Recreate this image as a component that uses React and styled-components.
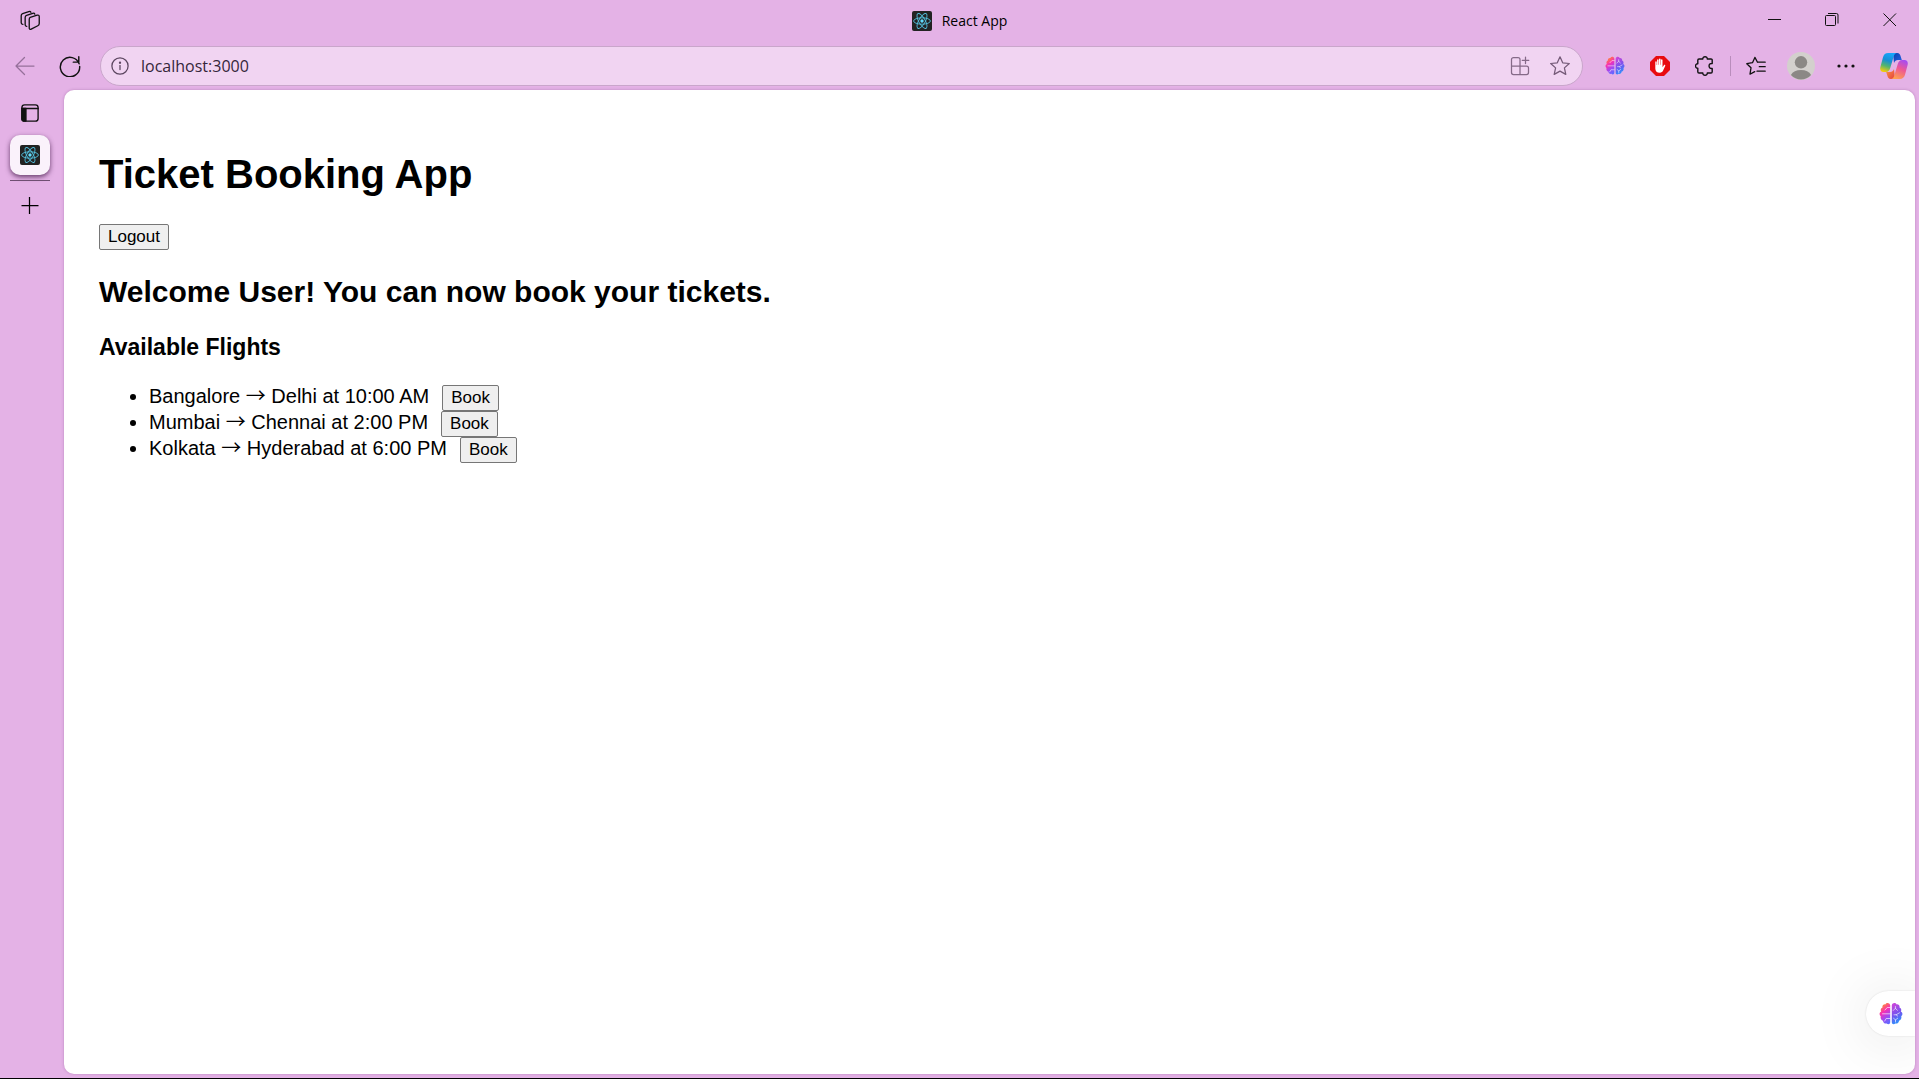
import React, { useId } from "react";
import styled, { createGlobalStyle } from "styled-components";

const color = {
  chrome: "#e4b2e6",
  field: "#f1d4f2",
  fieldBorder: "#c9a6cb",
  ink: "#111111",
};
const uiFont = `"Segoe UI", "Open Sans", "Noto Sans", sans-serif`;

const GlobalStyle = createGlobalStyle`
  * { box-sizing: border-box; }
  body { margin: 0; background: ${color.chrome}; }
`;

const Window = styled.div`
  display: flex;
  flex-direction: column;
  height: 100vh;
  background: ${color.chrome};
  border-bottom: 1px solid #000;
  font-family: ${uiFont};
  color: ${color.ink};
`;

const TitleBar = styled.header`
  display: grid;
  grid-template-columns: 1fr auto 1fr;
  height: 41px;
  flex: none;
`;

const TitleStart = styled.div`
  display: flex;
  align-items: center;
  padding-left: 10px;
`;

const TabTitle = styled.div`
  display: flex;
  align-items: center;
  gap: 10px;
  color: #000;
  font-size: 14px;
  line-height: 20px;
`;

const WindowControls = styled.div`
  display: flex;
  justify-content: flex-end;
`;

const IconButton = styled.button`
  display: flex;
  align-items: center;
  justify-content: center;
  flex: none;
  width: ${(p) => p.$width || 40}px;
  height: 40px;
  padding: 0;
  border: 0;
  background: none;
  color: ${(p) => p.$color || color.ink};
`;

const Toolbar = styled.nav`
  display: flex;
  align-items: center;
  gap: 5px;
  height: 49px;
  flex: none;
  padding: 0 2px 0 5px;
`;

const AddressBar = styled.div`
  display: flex;
  align-items: center;
  flex: 1;
  min-width: 0;
  height: 40px;
  margin: 0 7px 0 5px;
  padding-right: 2px;
  border: 1px solid ${color.fieldBorder};
  border-radius: 20px;
  background: ${color.field};
`;

const AddressInput = styled.input`
  flex: 1;
  min-width: 0;
  height: 30px;
  padding: 0 2px;
  border: 0;
  outline: 0;
  background: transparent;
  color: #35263a;
  font-family: ${uiFont};
  font-size: 16px;
`;

const ToolbarDivider = styled.span`
  width: 1px;
  height: 20px;
  background: #b98dbc;
`;

const Workspace = styled.div`
  display: flex;
  flex: 1;
  min-height: 0;
  padding: 0 4px 4px 0;
`;

const TabRail = styled.aside`
  display: flex;
  flex-direction: column;
  align-items: center;
  flex: none;
  width: 64px;
  padding: 3px 5px 0 0;
`;

const ActiveTab = styled.button`
  display: flex;
  align-items: center;
  justify-content: center;
  width: 40px;
  height: 40px;
  margin-top: 2px;
  padding: 0;
  border: 0;
  border-radius: 10px;
  background: #faf2fb;
  box-shadow: 0 2px 5px rgba(50, 10, 55, 0.7);
`;

const RailDivider = styled.hr`
  width: 40px;
  height: 1px;
  margin: 5px 0;
  border: 0;
  background: #6f4f72;
`;

const Viewport = styled.main`
  position: relative;
  flex: 1;
  min-width: 0;
  overflow: hidden;
  padding: 35px;
  border-radius: 10px;
  background: #fff;
  box-shadow: 0 0 3px rgba(90, 30, 95, 0.3);
  color: #000;
  font-family: Arial, "Liberation Sans", sans-serif;
  font-size: 20px;
`;

const AppTitle = styled.h1`
  margin: 26px 0 27px;
  font-size: 40px;
  line-height: 46px;
`;

const Welcome = styled.h2`
  margin: 25px 0;
  font-size: 30px;
  line-height: 34px;
`;

const SectionTitle = styled.h3`
  margin: 25px 0 24px;
  font-size: 23px;
  line-height: 27px;
`;

const ActionButton = styled.button`
  display: block;
  height: 26px;
  padding: 0 8px;
  border: 1px solid #767676;
  border-radius: 2px;
  background: #efefef;
  color: #000;
  font-family: Arial, "Liberation Sans", sans-serif;
  font-size: 17px;
  line-height: 24px;
`;

const FlightList = styled.ul`
  margin: 0;
  padding-left: 50px;
`;

const Flight = styled.li`
  line-height: 22px;

  ${ActionButton} {
    display: inline-block;
    margin-left: 13px;
  }
`;

const Arrow = styled.span`
  font-family: "Noto Sans CJK JP", sans-serif;
  line-height: 0;
`;

const AssistantButton = styled.button`
  position: absolute;
  right: 0;
  bottom: 38px;
  display: flex;
  align-items: center;
  width: 49px;
  height: 45px;
  padding: 0 0 0 13px;
  border: 0;
  border-radius: 23px 0 0 23px;
  background: #fff;
  box-shadow: 0 4px 60px rgba(0, 0, 0, 0.13), 0 0 2px rgba(0, 0, 0, 0.12);
`;

function Line({ size = 20, w = 1.25, children, ...rest }) {
  return (
    <svg width={size} height={size} viewBox="0 0 20 20" fill="none" stroke="currentColor" strokeWidth={w} strokeLinecap="round" strokeLinejoin="round" aria-hidden="true" {...rest}>
      {children}
    </svg>
  );
}

function ReactMark() {
  return (
    <svg width="20" height="20" viewBox="0 0 20 20" aria-hidden="true">
      <rect width="20" height="20" rx="2" fill="#222" />
      <g fill="none" stroke="#53bfdd" strokeWidth="0.9">
        {[0, 60, 120].map((a) => (
          <ellipse key={a} cx="10" cy="10" rx="8.4" ry="3.2" transform={`rotate(${a} 10 10)`} />
        ))}
      </g>
      <circle cx="10" cy="10" r="1.7" fill="#61dafb" />
    </svg>
  );
}

function Brain({ size }) {
  const id = useId();
  const lobe = "M11.2 3.2C10.7.7 7.5.3 6.4 2.4 4.4 2.1 3 3.8 3.5 5.5 1.7 6.2 1.3 8.2 2.2 9.5.2 10.3 0 13 1.8 14.3c-.7 2 .4 3.9 2.2 4.4.1 2 2 3.3 3.7 2.7 1.4 1.5 3.5.8 3.5-1.2z";
  return (
    <svg width={size} height={size} viewBox="0 0 24 24" aria-hidden="true">
      <defs>
        <linearGradient id={`${id}l`} x1="0.25" y1="0" x2="0.65" y2="1">
          <stop offset="0" stopColor="#ff961f" />
          <stop offset=".12" stopColor="#ff7a45" />
          <stop offset=".4" stopColor="#f72fb5" />
          <stop offset=".7" stopColor="#a449ef" />
          <stop offset="1" stopColor="#6568ff" />
        </linearGradient>
        <linearGradient id={`${id}r`} x1="0.6" y1="0" x2="0.3" y2="1">
          <stop offset="0" stopColor="#c645db" />
          <stop offset=".5" stopColor="#7354ef" />
          <stop offset="1" stopColor="#1e9fff" />
        </linearGradient>
      </defs>
      <path d={lobe} fill={`url(#${id}l)`} />
      <path d={lobe} transform="matrix(-1 0 0 1 24 0)" fill={`url(#${id}r)`} />
      <g fill="none" stroke="#fff" strokeOpacity=".7" strokeWidth=".9" strokeLinecap="round">
        <path d="M3.5 11.8H11M11 5.5H8.3L6 8M11 16.5H7.2L5.7 19" />
        <path d="M14.2 8.5l2.2-2.2 2 2M16.4 6.3V4.5M15 12.8h2l3.5-2M17 12.8l1.6 1.2M14.5 16.2l2 1.7 2.2-1.7M16.5 17.9V20" />
      </g>
    </svg>
  );
}

function StopHand() {
  return (
    <svg width="20" height="20" viewBox="0 0 20 20" aria-hidden="true">
      <path d="M6 0h8l6 6v8l-6 6H6l-6-6V6z" fill="#e80b0f" />
      <path d="M5.3 10V6.1c0-1.1 1.4-1.1 1.4 0v3h.4V4c0-1.1 1.5-1.1 1.5 0v4.800h.4V3.200c0-1.100 1.600-1.100 1.600 0v5.600h.4V4.100c0-1.100 1.500-1.100 1.500 0v7.200l1.400-2c.6-.9 1.700-.3 1.300.6l-2.100 4.700c-.6 1.400-1.600 2.100-3.200 2.100-3 0-4.600-1.600-4.600-4.300z" fill="#fff" />
    </svg>
  );
}

function Avatar() {
  return (
    <svg width="28" height="28" viewBox="0 0 28 28" aria-hidden="true">
      <circle cx="14" cy="14" r="14" fill="#d3d0cd" />
      <circle cx="14" cy="10.3" r="6.2" fill="#8b8885" />
      <path d="M3.9 23.1C5.7 19.7 9.3 18 14 18s8.3 1.7 10.1 5.1A14 14 0 0 1 14 27.6 14 14 0 0 1 3.9 23.1z" fill="#8b8885" />
    </svg>
  );
}

function Copilot() {
  const id = useId();
  return (
    <svg width="28" height="28" viewBox="0 0 28 28" aria-hidden="true">
      <defs>
        <linearGradient id={`${id}a`} x1="0.6" y1="0" x2="0.3" y2="1">
          <stop offset="0" stopColor="#17a5fb" />
          <stop offset=".4" stopColor="#168fd5" />
          <stop offset=".7" stopColor="#55b56c" />
          <stop offset="1" stopColor="#f4cb0c" />
        </linearGradient>
        <linearGradient id={`${id}b`} x1="0.7" y1="0" x2="0.3" y2="1">
          <stop offset="0" stopColor="#a84bf0" />
          <stop offset=".45" stopColor="#ee5794" />
          <stop offset="1" stopColor="#ffa34e" />
        </linearGradient>
        <linearGradient id={`${id}c`} x1="0" y1="0" x2="1" y2="1">
          <stop offset="0" stopColor="#0a3eaa" />
          <stop offset="1" stopColor="#2465e8" />
        </linearGradient>
        <linearGradient id={`${id}d`} x1="0" y1="0" x2="1" y2="1">
          <stop offset="0" stopColor="#ff9a3d" />
          <stop offset="1" stopColor="#e33d43" />
        </linearGradient>
      </defs>
      <path d="M13 1h4.300c2 0 2.800 1.400 3.400 3.500L21.800 8H18c-2 0-3.300 1.100-4 3z" fill={`url(#${id}c)`} />
      <path d="M15 27h-4.300c-2 0-2.800-1.400-3.400-3.500L6.200 20H10c2 0 3.300-1.100 4-3z" fill={`url(#${id}d)`} />
      <path d="M8.200 1h8.500c-1.700.3-2.500 1.700-3 3.500l-3.300 11C9.500 18.400 8.300 20 5.900 20H3.400C.8 20-.3 17.900.4 15L3 5.200C3.700 2.600 5.400 1 8.200 1z" fill={`url(#${id}a)`} />
      <path d="M19.800 27h-8.500c1.700-.3 2.500-1.700 3-3.500l3.300-11C18.500 9.600 19.700 8 22.100 8h2.500c2.600 0 3.700 2.100 3 5L25 22.800c-.7 2.600-2.400 4.200-5.200 4.200z" fill={`url(#${id}b)`} />
    </svg>
  );
}

const flights = [
  { from: "Bangalore", to: "Delhi", time: "10:00 AM" },
  { from: "Mumbai", to: "Chennai", time: "2:00 PM" },
  { from: "Kolkata", to: "Hyderabad", time: "6:00 PM" },
];

export default function App() {
  return (
    <Window>
      <GlobalStyle />
      <TitleBar>
        <TitleStart>
          <IconButton aria-label="Workspaces">
            <Line size={22} w={1.2}>
              <path d="M10.2 6.7l6.3-2c1-.3 1.9.2 1.9 1.2v6.3c0 1-.4 1.7-1.3 2.1l-6 3.1c-1 .5-1.8 0-1.8-1V8.600c0-1 .1-1.600.9-1.900z" />
              <path d="M7 14.900c-1-.1-1.400-.6-1.400-1.500V6.800c0-1 .4-1.600 1.300-1.900L12.500 3c1-.3 1.600 0 1.900.8" />
              <path d="M3.500 13.100c-1-.1-1.500-.6-1.500-1.500V5.200c0-1 .4-1.600 1.300-1.900l5.600-1.900c1-.3 1.600 0 1.900.7" />
            </Line>
          </IconButton>
        </TitleStart>
        <TabTitle>
          <ReactMark />
          <span>React App</span>
        </TabTitle>
        <WindowControls>
          <IconButton $width={58} aria-label="Minimize">
            <svg width="13" height="13" stroke="currentColor" aria-hidden="true"><path d="M0 5.500h13" /></svg>
          </IconButton>
          <IconButton $width={58} aria-label="Restore">
            <svg width="14" height="14" fill="none" stroke="currentColor" aria-hidden="true">
              <rect x=".5" y="2.500" width="10" height="10" rx="1" />
              <path d="M3 .5h8.500a1.500 1.500 0 0 1 1.500 1.500v8.500" />
            </svg>
          </IconButton>
          <IconButton $width={58} aria-label="Close">
            <svg width="14" height="14" stroke="currentColor" aria-hidden="true"><path d="M.5.5l12.500 12.500M13 .5L.5 13" /></svg>
          </IconButton>
        </WindowControls>
      </TitleBar>

      <Toolbar>
        <IconButton aria-label="Back" $color="#95709a">
          <Line><path d="M19 10H1M9.500 1.500L1 10l8.500 8.500" /></Line>
        </IconButton>
        <IconButton aria-label="Refresh">
          <Line size={22} w={1.3}><path d="M18.300 8A8.800 8.800 0 1 0 18.800 10.500M18 1.500v5h-5" /></Line>
        </IconButton>
        <AddressBar>
          <IconButton $width={38} aria-label="Site information" $color="#5c4660">
            <Line size={18} w={1.4}>
              <circle cx="10" cy="10" r="9" />
              <path d="M10 9.500v4.500" /><circle cx="10" cy="6.300" r=".6" fill="currentColor" />
            </Line>
          </IconButton>
          <AddressInput aria-label="Address" defaultValue="localhost:3000" />
          <IconButton aria-label="Apps" $color="#856a88">
            <Line>
              <path d="M10 10H1.500v6.500a2 2 0 0 0 2 2h13a2 2 0 0 0 2-2V12a2 2 0 0 0-2-2H10zm0 0v8.500M10 10V3.500a2 2 0 0 0-2-2H3.500a2 2 0 0 0-2 2V10M15.500 1v6.500M12.200 4.300h6.600" />
            </Line>
          </IconButton>
          <IconButton aria-label="Favorite this page" $color="#755a78">
            <Line><path d="M10 .8l2.700 6 6.600.7-4.900 4.400 1.400 6.500-5.800-3.300-5.800 3.300 1.400-6.500L.7 7.500l6.600-.7z" /></Line>
          </IconButton>
        </AddressBar>
        <IconButton aria-label="AI assistant"><Brain size={20} /></IconButton>
        <IconButton aria-label="Ad blocker"><StopHand /></IconButton>
        <IconButton aria-label="Extensions">
          <Line w={1.400}>
            <path d="M4 3h3.800c-.2-3 4.700-3 4.500 0H16a1.200 1.200 0 0 1 1.200 1.200v3.300c-4.200-.7-4.200 5.700 0 5v3.300A1.200 1.200 0 0 1 16 17h-3.700c.2 3-4.700 3-4.500 0H4a1.200 1.200 0 0 1-1.200-1.200v-3.500c-3 .1-3-4.700 0-4.600V4.200A1.200 1.200 0 0 1 4 3z" />
          </Line>
        </IconButton>
        <ToolbarDivider />
        <IconButton aria-label="Favorites">
          <Line w={1.300}>
            <path d="M11.500 6.200L8.900 1.400 6.500 6.700.8 7.700l4.200 4.100-1 6.400 4.700-2.600M11.500 6.200h7.700M13.300 10.700h5.900M11 15.200h8.200" />
          </Line>
        </IconButton>
        <IconButton aria-label="Profile"><Avatar /></IconButton>
        <IconButton aria-label="Settings and more">
          <svg width="18" height="4" fill="currentColor" aria-hidden="true">
            <circle cx="2" cy="2" r="1.600" /><circle cx="9" cy="2" r="1.600" /><circle cx="16" cy="2" r="1.600" />
          </svg>
        </IconButton>
        <IconButton $width={46} aria-label="Copilot"><Copilot /></IconButton>
      </Toolbar>

      <Workspace>
        <TabRail>
          <IconButton aria-label="Tab actions">
            <Line size={18} w={1.500}>
              <rect x="1" y="1" width="18" height="18" rx="3" />
              <path d="M1 5h18" /><path d="M1 5h4.500v14H3a2 2 0 0 1-2-2z" fill="currentColor" />
            </Line>
          </IconButton>
          <ActiveTab aria-label="React App tab"><ReactMark /></ActiveTab>
          <RailDivider />
          <IconButton aria-label="New tab">
            <svg width="18" height="18" stroke="#000" strokeWidth="1.250" aria-hidden="true"><path d="M.5 8.500h17M8.500 0v17" /></svg>
          </IconButton>
        </TabRail>

        <Viewport>
          <AppTitle>Ticket Booking App</AppTitle>
          <ActionButton>Logout</ActionButton>
          <Welcome>Welcome User! You can now book your tickets.</Welcome>
          <SectionTitle>Available Flights</SectionTitle>
          <FlightList>
            {flights.map((f) => (
              <Flight key={f.from}>
                {f.from} <Arrow>→</Arrow> {f.to} at {f.time}
                <ActionButton>Book</ActionButton>
              </Flight>
            ))}
          </FlightList>
          <AssistantButton aria-label="Open AI assistant"><Brain size={24} /></AssistantButton>
        </Viewport>
      </Workspace>
    </Window>
  );
}
